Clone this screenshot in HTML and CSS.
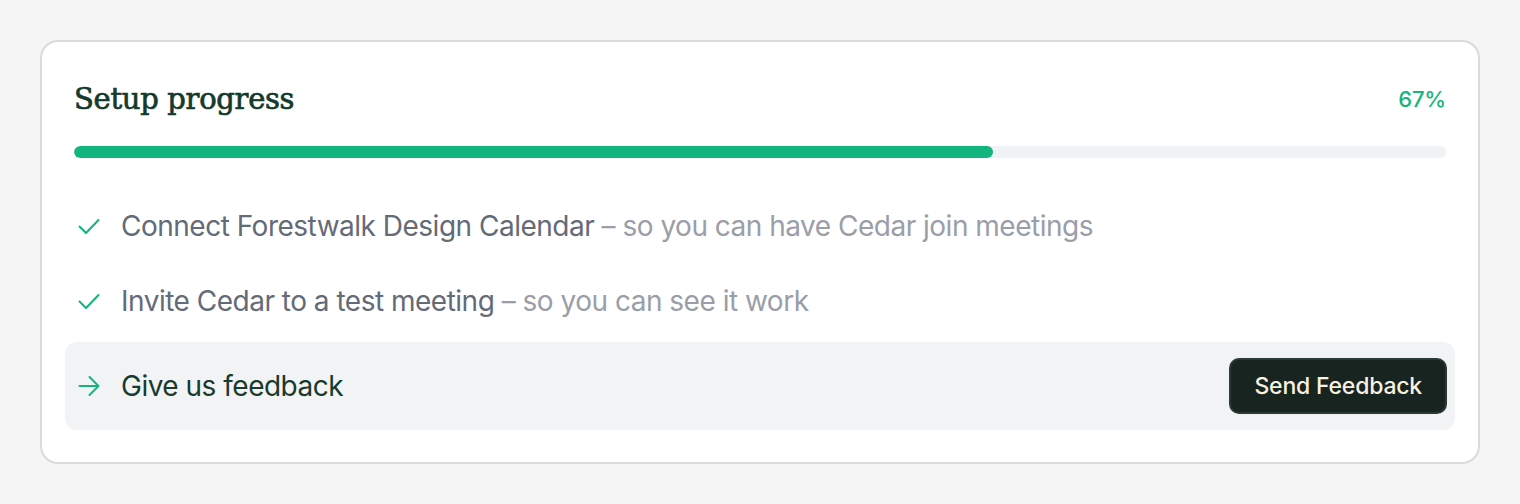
FILE: index.html
```html
<!DOCTYPE html>
<html lang="en">
<head>
<meta charset="utf-8">
<title>Setup progress</title>
<link rel="stylesheet" href="styles.css">
</head>
<body>
<main class="page">
  <section class="card">
    <header class="card-head">
      <h2 class="card-title">Setup progress</h2>
      <span class="card-percent">67%</span>
    </header>

    <div class="progress"><div class="progress-fill" style="width: 67%"></div></div>

    <ul class="steps">
      <li class="step done">
        <svg class="step-icon" viewBox="0 0 22 22" fill="none" stroke="currentColor" stroke-width="2" stroke-linecap="round" stroke-linejoin="round"><path d="M1.5 11.5l6.5 6.5L20.5 5"/></svg>
        <span class="step-text"><span class="step-main">Connect Forestwalk Design Calendar</span> <span class="step-sub">– so you can have Cedar join meetings</span></span>
      </li>
      <li class="step done">
        <svg class="step-icon" viewBox="0 0 22 22" fill="none" stroke="currentColor" stroke-width="2" stroke-linecap="round" stroke-linejoin="round"><path d="M1.5 11.5l6.5 6.5L20.5 5"/></svg>
        <span class="step-text"><span class="step-main">Invite Cedar to a test meeting</span> <span class="step-sub">– so you can see it work</span></span>
      </li>
      <li class="step current">
        <svg class="step-icon" viewBox="0 0 22 22" fill="none" stroke="currentColor" stroke-width="2" stroke-linecap="round" stroke-linejoin="round"><path d="M1.5 11h19M11.5 2l9 9-9 9"/></svg>
        <span class="step-text"><span class="step-main">Give us feedback</span></span>
        <button class="btn-dark" type="button">Send Feedback</button>
      </li>
    </ul>
  </section>
</main>
</body>
</html>
```

FILE: styles.css
```css
* { box-sizing: border-box; }

html, body {
  margin: 0;
  background: #f5f5f5;
}

body {
  font-family: Inter, "Noto Sans", sans-serif;
}

.page {
  padding: 40px 40px;
}

.card {
  background: #ffffff;
  border: 2px solid #d9dadb;
  border-radius: 18px;
  padding: 30px 32px 32px;
}

.card-head {
  display: flex;
  align-items: center;
  justify-content: space-between;
  height: 54px;
}

.card-title {
  margin: 0;
  font-family: "DejaVu Serif", "Liberation Serif", serif;
  font-weight: 400;
  font-size: 29px;
  color: #133a2b;
  letter-spacing: -0.3px;
  -webkit-text-stroke: 0.7px #133a2b;
}

.card-percent {
  font-size: 22px;
  font-weight: 500;
  letter-spacing: -0.2px;
  color: #16b47c;
}

.progress {
  margin-top: 20px;
  height: 12px;
  border-radius: 6px;
  background: #f1f2f4;
  overflow: hidden;
}

.progress-fill {
  height: 100%;
  border-radius: 6px;
  background: #13b57e;
}

.steps {
  list-style: none;
  margin: 30px -9px 0;
  padding: 0;
  display: flex;
  flex-direction: column;
}

.step {
  display: flex;
  align-items: center;
  gap: 21px;
  min-height: 75px;
  padding: 0 8px 0 13px;
  font-size: 28px;
  letter-spacing: -0.5px;
}

.step-icon {
  width: 22px;
  height: 22px;
  flex: none;
  color: #16b47c;
}

.step-text { flex: 1; }

.step-main { color: #646a77; }

.step-sub { color: #9a9ea8; }

.step.current {
  margin-top: 4px;
  min-height: 88px;
  background: #f2f3f5;
  border-radius: 12px;
}

.step.current .step-main { color: #183b2c; }

.btn-dark {
  font-family: inherit;
  font-size: 23px;
  font-weight: 500;
  letter-spacing: -0.2px;
  color: #f6f1e1;
  background: #17241f;
  border: 2px solid #2b3a34;
  border-radius: 10px;
  height: 56px;
  padding: 0 23px;
  cursor: pointer;
}
```
